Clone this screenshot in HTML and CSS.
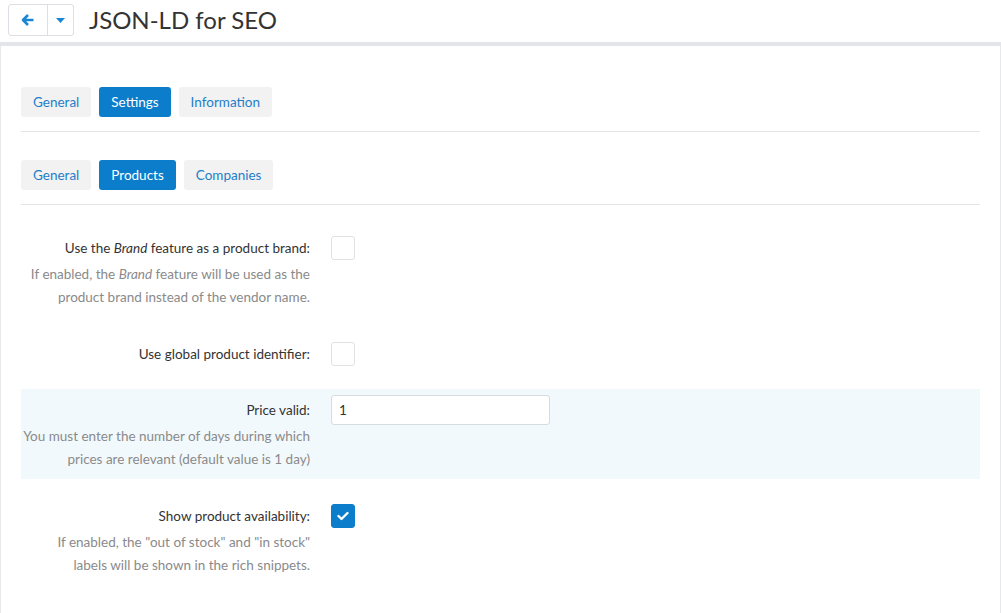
FILE: index.html
```html
<!DOCTYPE html>
<html>
<head>
<meta charset="utf-8">
<link rel="stylesheet" href="styles.css">
</head>
<body>
<header class="topbar">
  <div class="btn-group">
    <button class="btn btn-back" aria-label="Back">
      <svg width="14" height="14" viewBox="0 0 14 14"><path d="M7 2 L2 7 L7 12 M2.5 7 H12.5" fill="none" stroke="#1a86d4" stroke-width="2.6" stroke-linejoin="round"/></svg>
    </button>
    <button class="btn btn-caret" aria-label="More">
      <svg width="9" height="5" viewBox="0 0 9 5"><path d="M0 0 H9 L4.5 5 Z" fill="#1a86d4"/></svg>
    </button>
  </div>
  <h1 class="title">JSON-LD for SEO</h1>
</header>
<main class="panel">
  <nav class="tabs">
    <a class="tab">General</a>
    <a class="tab active">Settings</a>
    <a class="tab">Information</a>
  </nav>
  <nav class="tabs sub">
    <a class="tab">General</a>
    <a class="tab active">Products</a>
    <a class="tab">Companies</a>
  </nav>
  <div class="form">
    <div class="row">
      <div class="label-col">
        <div class="label">Use the <em>Brand</em> feature as a product brand:</div>
        <div class="desc"><span class="line">If enabled, the <em>Brand</em> feature will be used as the</span><span class="line">product brand instead of the vendor name.</span></div>
      </div>
      <div class="control"><span class="checkbox"></span></div>
    </div>
    <div class="row">
      <div class="label-col">
        <div class="label">Use global product identifier:</div>
      </div>
      <div class="control"><span class="checkbox"></span></div>
    </div>
    <div class="row highlight">
      <div class="label-col">
        <div class="label input-label">Price valid:</div>
        <div class="desc"><span class="line">You must enter the number of days during which</span><span class="line">prices are relevant (default value is 1 day)</span></div>
      </div>
      <div class="control"><input class="text-input" type="text" value="1"></div>
    </div>
    <div class="row">
      <div class="label-col">
        <div class="label">Show product availability:</div>
        <div class="desc"><span class="line">If enabled, the "out of stock" and "in stock"</span><span class="line">labels will be shown in the rich snippets.</span></div>
      </div>
      <div class="control"><span class="checkbox checked"><svg width="12" height="10" viewBox="0 0 12 10"><path d="M1.5 5 L4.5 8 L10.5 2" fill="none" stroke="#fff" stroke-width="2.4" stroke-linecap="round" stroke-linejoin="round"/></svg></span></div>
    </div>
  </div>
</main>
</body>
</html>
```
FILE: styles.css
```css
html, body {
  margin: 0;
  padding: 0;
  background: #fff;
  font-family: Lato, "Open Sans", sans-serif;
  font-size: 13.5px;
  color: #333;
}
.topbar {
  height: 42px;
  display: flex;
  align-items: flex-start;
  padding-left: 8px;
  border-bottom: 4px solid #e3e5e8;
  box-sizing: content-box;
}
.btn-group {
  display: flex;
  margin-top: 4px;
  border: 1px solid #dcdfe3;
  border-radius: 3px;
  height: 30px;
  background: #fff;
}
.btn {
  border: 0;
  background: transparent;
  padding: 0;
  display: flex;
  align-items: center;
  justify-content: center;
  height: 30px;
}
.btn-back { width: 39px; border-right: 1px solid #dcdfe3; }
.btn-caret { width: 25px; }
.title {
  margin: 5px 0 0 15px;
  font-size: 24px;
  font-weight: 400;
  line-height: 30px;
  color: #333;
}
.panel {
  border-left: 1px solid #e6e8eb;
  border-right: 1px solid #e6e8eb;
  padding: 41px 20px 16px 20px;
}
.tabs {
  display: flex;
  gap: 8px;
  padding-bottom: 14px;
  border-bottom: 1px solid #e3e5e8;
}
.tabs.sub { margin-top: 28px; }
.tab {
  height: 30px;
  line-height: 30px;
  padding: 0 12px;
  border-radius: 3px;
  background: #f2f2f3;
  color: #1f7ec8;
  cursor: pointer;
}
.tab.active {
  background: #0b7dcb;
  color: #fff;
}
.form { margin-top: 25px; }
.row {
  display: flex;
  padding: 6px 0 4px;
  margin-bottom: 19px;
}
.row:last-child { margin-bottom: 12px; }
.row.highlight { background: #f2f9fd; }
.label-col {
  width: 289px;
  text-align: right;
  flex-shrink: 0;
}
.label {
  line-height: 24px;
  color: #333;
}
.input-label { padding-top: 3px; }
.desc {
  margin-top: 3px;
  margin-bottom: 4px;
  line-height: 23px;
  color: #8a8a8a;
}
.desc .line {
  display: block;
  white-space: nowrap;
}
.control { margin-left: 21px; }
.checkbox {
  display: flex;
  align-items: center;
  justify-content: center;
  width: 22px;
  height: 22px;
  border: 1px solid #dfe1e4;
  border-radius: 3px;
  background: #fff;
}
.checkbox.checked {
  background: #0b7dcb;
  border-color: #0b7dcb;
}
.text-input {
  width: 219px;
  height: 30px;
  box-sizing: border-box;
  border: 1px solid #d8dbdf;
  border-radius: 3px;
  padding: 0 7px;
  font-family: Lato, "Open Sans", sans-serif;
  font-size: 13.5px;
  color: #333;
  outline: none;
}
```
